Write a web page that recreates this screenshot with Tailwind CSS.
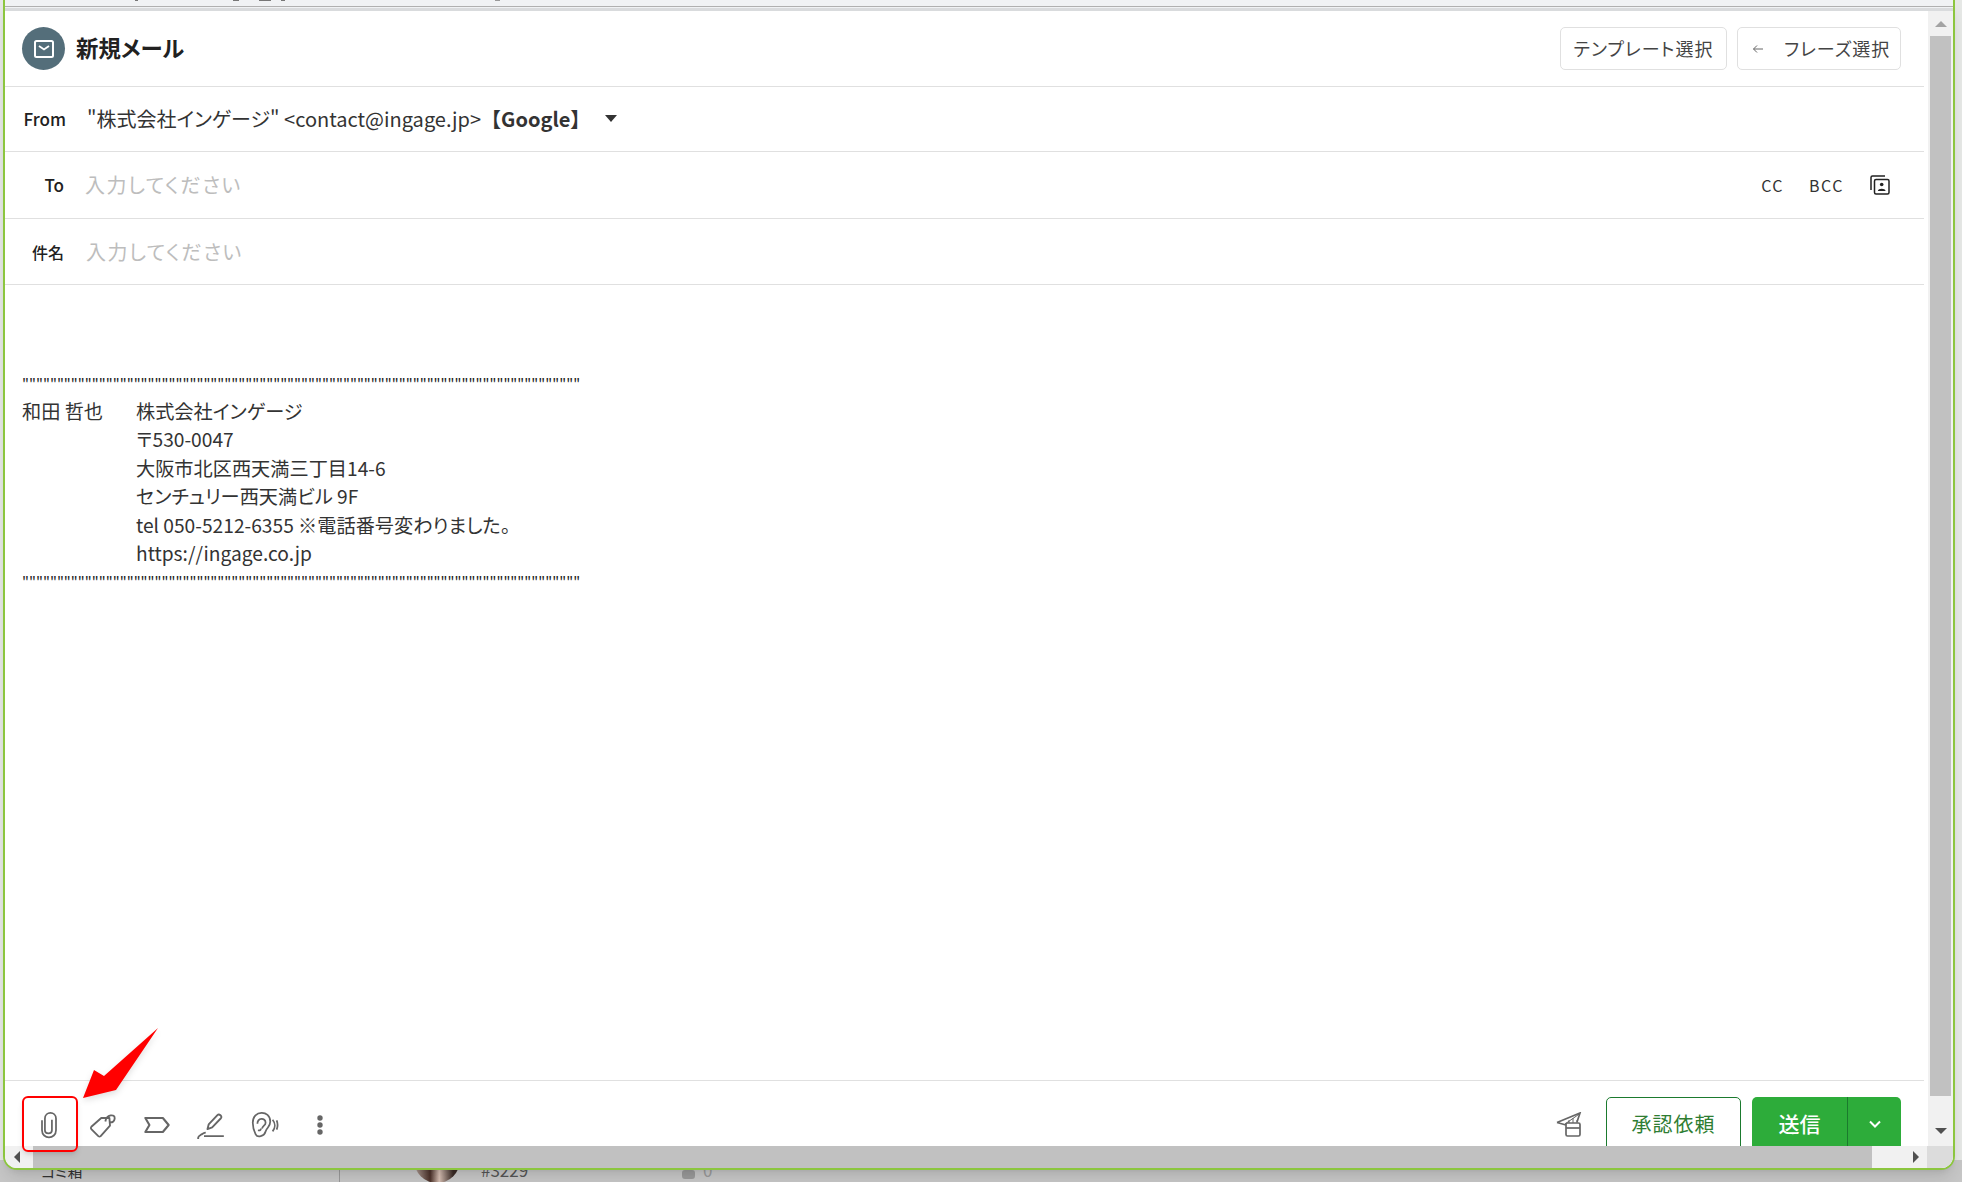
<!DOCTYPE html>
<html lang="ja">
<head>
<meta charset="UTF-8">
<title>新規メール</title>
<script src="https://cdn.jsdelivr.net/npm/@tailwindcss/browser@4"></script>
</head>
<body class="relative w-[1962px] h-[1182px] overflow-hidden bg-[#e6e8e6] text-[#212121] font-['Noto_Sans_CJK_JP','Noto_Sans',sans-serif] [font-feature-settings:'palt']">

<!-- page behind the window -->
<div class="absolute left-0 bottom-0 w-full h-[22px] bg-[#c6c6c6]"></div>
<div class="absolute left-[41px] top-[1160px] text-[15px] leading-[22px] text-[#333]">ゴミ箱</div>
<div class="absolute left-[339px] top-[1170px] w-px h-[12px] bg-[#999]"></div>
<div class="absolute left-[414px] top-[1137px] w-[46px] h-[46px] rounded-full bg-[linear-gradient(90deg,#b9a79e_0%,#4a3028_35%,#d8c0b4_55%,#3a2a25_85%)]"></div>
<div class="absolute left-[481px] top-[1158px] text-[17px] leading-[24px] text-[#555]">#3229</div>
<div class="absolute left-[682px] top-[1170px] w-[13px] h-[9px] rounded-[3px] bg-[#999]"></div>
<div class="absolute left-[703px] top-[1158px] text-[17px] leading-[24px] text-[#999]">0</div>

<!-- window -->
<div class="relative ml-[3px] w-[1952px] h-[1170px] flex flex-col bg-white border-[2.5px] border-t-0 border-[#8cc63f] rounded-b-[14px] overflow-hidden shadow-lg">
  <div class="h-[11px] shrink-0 bg-[#f0f2f4] border-b-[3px] border-[#d9dbdd]">
    <div class="h-[7px] border-b border-[#b0b0b0] flex items-start">
      <i class="ml-[130px] w-[3px] h-[1px] bg-[#777]"></i>
      <i class="ml-[95px] w-[6px] h-[1px] bg-[#777]"></i>
      <i class="ml-[20px] w-[12px] h-[1px] bg-[#777]"></i>
      <i class="ml-[10px] w-[4px] h-[1px] bg-[#777]"></i>
      <i class="ml-[210px] w-[5px] h-[1px] bg-[#999]"></i>
    </div>
  </div>

  <div class="flex-1 flex min-h-0">
    <main class="flex-1 flex flex-col min-w-0 mr-[4px]">
      <header class="h-[76px] shrink-0 flex items-center border-b border-[#e0e0e0] pl-[17px] pr-[23px]">
        <div class="w-[43px] h-[43px] rounded-full bg-[#546e7a] flex items-center justify-center">
          <svg class="w-[20px] h-[18px]" viewBox="0 0 20 18" fill="none" stroke="#fff"><rect x="1" y="1" width="18" height="16" rx="1.500" stroke-width="2"/><path d="M5 6l5 3.500L15 6" stroke-width="1.800"/></svg>
        </div>
        <h1 class="ml-[11px] pb-[2px] text-[22.400px] font-bold">新規メール</h1>
        <div class="ml-auto flex gap-[10px]">
          <button class="h-[43px] w-[167px] border border-[#e0e0e0] rounded-[5px] text-[18px] tracking-[1px] text-[#444]">テンプレート選択</button>
          <button class="h-[43px] w-[164px] border border-[#e0e0e0] rounded-[5px] text-[18px] tracking-[1px] text-[#444] flex items-center pl-[14px]">
            <svg class="w-[12px] h-[12px] mr-[20px]" viewBox="0 0 12 12" fill="none" stroke="#666" stroke-width="1"><path d="M11 6H1.500M5 2.500 1.500 6 5 9.500"/></svg>フレーズ選択
          </button>
        </div>
      </header>

      <div class="h-[65px] shrink-0 flex items-center border-b border-[#e0e0e0]">
        <span class="w-[61px] text-right text-[17px] font-medium">From</span>
        <span class="ml-[21px] text-[20px] text-[#333]">"株式会社インゲージ" &lt;contact@ingage.jp&gt;<b class="font-bold [font-feature-settings:normal]">【Google】</b></span>
        <svg class="ml-[14px] w-[14px] h-[8px]" viewBox="0 0 14 8"><path d="M1 0h12L7 7z" fill="#333"/></svg>
      </div>
      <div class="h-[67px] shrink-0 flex items-center border-b border-[#e0e0e0] pr-[34px]">
        <span class="w-[59px] text-right text-[17px] font-medium">To</span>
        <span class="ml-[21px] text-[20px] tracking-[1.500px] text-[#bdbdbd]">入力してください</span>
        <span class="ml-auto text-[16px] tracking-[1.500px] text-[#333]">CC</span>
        <span class="ml-[25px] text-[16px] tracking-[1.500px] text-[#333]">BCC</span>
        <svg class="ml-[26px] w-[20px] h-[20px]" viewBox="0 0 20 20" fill="none" stroke="#222" stroke-width="1.500"><path d="M1 15V2.500C1 1.500 1.500 1 2.500 1H15"/><rect x="4.500" y="4.500" width="14.500" height="14.500" rx="1.500"/><circle cx="11.700" cy="9.500" r="1.800" fill="#222" stroke="none"/><path d="M7.800 16c.4-3 7.400-3 7.800 0z" fill="#222" stroke="none"/></svg>
      </div>
      <div class="h-[66px] shrink-0 flex items-center border-b border-[#e0e0e0]">
        <span class="w-[59px] text-right text-[16px] font-medium">件名</span>
        <span class="ml-[22px] text-[20px] tracking-[1.500px] text-[#bdbdbd]">入力してください</span>
      </div>

      <div class="flex-1 min-h-0 pt-[83px] pl-[17px] text-[19.200px] leading-[28.500px] text-[#333]">
        <div class="pt-[3px] -mb-[3px] text-[14.700px] whitespace-nowrap text-[#222]">""""""""""""""""""""""""""""""""""""""""""""""""""""""""""""""""""""""""""""""""</div>
        <div class="flex">
          <div class="w-[114px]">和田 哲也</div>
          <div>
            <div>株式会社インゲージ</div>
            <div>〒530-0047</div>
            <div>大阪市北区西天満三丁目14-6</div>
            <div>センチュリー西天満ビル 9F</div>
            <div>tel 050-5212-6355 ※電話番号変わりました。</div>
            <div>https://ingage.co.jp</div>
          </div>
        </div>
        <div class="pt-[1px] text-[14.700px] whitespace-nowrap text-[#222]">""""""""""""""""""""""""""""""""""""""""""""""""""""""""""""""""""""""""""""""""</div>
      </div>

      <footer class="h-[66px] shrink-0 border-t border-[#e0e0e0] flex pl-[30px] pr-[23px] overflow-hidden">
        <div class="flex items-center gap-[26px] pt-[23px]">
          <svg class="w-[28px] h-[28px]" viewBox="0 0 24 24" fill="none" stroke="#666" stroke-width="1.500"><path d="M6 8v8.500c0 8 12 8 12 0V6.500c0-6.500-9.500-6.500-9.500 0v10c0 3.500 6 3.500 6 0V7.500"/></svg>
          <svg class="w-[28px] h-[28px]" viewBox="0 0 24 24" fill="none" stroke="#666" stroke-width="1.600"><path d="M2 13.500 10.500 6h7l.5 6.500-8 9a1.500 1.500 0 0 1-2 0L2 15.500a1.500 1.500 0 0 1 0-2z" stroke-linejoin="round"/><path d="M14 9c1-6 8.500-7 8-2.500-.3 3-2.500 3.500-4 3"/></svg>
          <svg class="w-[28px] h-[28px]" viewBox="0 0 24 24" fill="none" stroke="#666" stroke-width="1.800"><path d="M2 6H17l5 6-5 6H2l3.500-6z" stroke-linejoin="round"/></svg>
          <svg class="w-[28px] h-[28px]" viewBox="0 0 24 24" fill="none" stroke="#666" stroke-width="1.600"><path d="M9 15.500l1-4 7.500-8c1.500-1.500 4.500 1 3 2.700L13 14z" stroke-linejoin="round"/><path d="M6 21.500H23M1 24v-1c0-1.500 1.500-2 3-3 1-.5 2-1.500 3.500-1.500"/></svg>
          <svg class="w-[28px] h-[28px]" viewBox="0 0 24 24" fill="none" stroke="#666" stroke-width="1.500"><path d="M1.500 10c0-11 15-11 15-1 0 5-3 5-4 8.500-1.200 4.500-7 5.500-8.500 2.500-1.200-2.500-2.500-5.500-2.500-10z"/><path d="M5.500 11c0-5.500 7-5.500 7-1 0 2.500-2.500 2.500-3 5M6 16.500c1.500.5 2.500 0 2.500-1.500"/><path d="M18.500 7.500c2.500 3 2.500 7 0 10M22 8c1 2.500 1 5.500 0 8"/></svg>
          <svg class="w-[8px] h-[20px] ml-[11px]" viewBox="0 0 8 20" fill="#666"><circle cx="4" cy="3" r="2.700"/><circle cx="4" cy="10" r="2.700"/><circle cx="4" cy="17" r="2.700"/></svg>
        </div>
        <div class="ml-auto flex items-start pt-[16px]">
          <svg class="w-[26px] h-[25px] mt-[15px] mr-[24px]" viewBox="0 0 26 25" fill="none" stroke="#666" stroke-width="1.700"><path d="M1 10.500 24 1 21 10M1 10.500l9 2.500"/><path d="M9 12 24 1.500M13 8v3M17 6v5M21 8v3" stroke-width="1"/><rect x="10" y="11" width="14" height="13" rx="1.500"/><path d="M10 16h14"/></svg>
          <button class="w-[135px] h-[70px] border border-[#1b7a2e] rounded-[5px] text-[20px] font-normal text-[#2e7d32] tracking-[1px] pb-[16px]">承認依頼</button>
          <div class="ml-[11px] w-[149px] h-[70px] rounded-[5px] bg-[#2dac3a] flex text-white">
            <span class="w-[95px] flex items-center justify-center text-[21px] font-medium pb-[16px]">送信</span>
            <span class="flex-1 border-l border-[#1b7a2e] pb-[16px] flex items-center justify-center"><svg class="w-[12px] h-[8px]" viewBox="0 0 12 8" fill="none" stroke="#fff" stroke-width="2"><path d="m1 1.500 5 5 5-5"/></svg></span>
          </div>
        </div>
      </footer>
    </main>

    <!-- vertical scrollbar -->
    <div class="w-[25px] shrink-0 bg-[#f1f1f1] flex flex-col items-center">
      <div class="h-[25px] flex items-center justify-center"><div class="border-x-[6px] border-x-transparent border-b-[6px] border-b-[#a3a3a3]"></div></div>
      <div class="w-[21px] h-[1060px] bg-[#c1c1c1]"></div>
      <div class="flex-1 flex items-end justify-center pb-[12px]"><div class="border-x-[6px] border-x-transparent border-t-[6px] border-t-[#505050]"></div></div>
    </div>
  </div>

  <!-- horizontal scrollbar -->
  <div class="h-[22px] shrink-0 bg-[#f1f1f1] flex items-center">
    <div class="w-[27.500px] flex pl-[9px]"><div class="border-y-[6px] border-y-transparent border-r-[6px] border-r-[#505050]"></div></div>
    <div class="w-[1839px] h-full bg-[#c1c1c1]"></div>
    <div class="w-[55px] flex justify-end pr-[8px]"><div class="border-y-[6px] border-y-transparent border-l-[6px] border-l-[#505050]"></div></div>
    <div class="flex-1 h-full bg-[#dcdcdc]"></div>
  </div>
</div>

<!-- annotation over screenshot -->
<div class="absolute left-[22px] top-[1096px] w-[56px] h-[56px] border-2 border-[#ff0000] rounded-[6px] shadow-md"></div>
<svg class="absolute left-[80px] top-[1025px] drop-shadow-md" width="85" height="80" viewBox="0 0 85 80"><path d="M78 3 36 65 3 73 14 45l10 6z" fill="#f00"/></svg>
</body>
</html>
